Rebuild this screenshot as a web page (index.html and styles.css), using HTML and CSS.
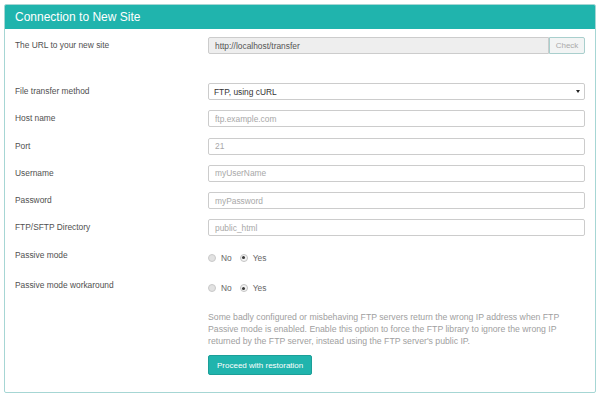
FILE: index.html
```html
<!DOCTYPE html>
<html lang="en">
<head>
    <meta charset="UTF-8">
    <title>Connection to New Site</title>
    <link rel="stylesheet" href="styles.css">
</head>
<body>
    <div class="panel">
        <div class="panel-heading">Connection to New Site</div>
        <form class="panel-body">
            <div class="row row-url">
                <label class="row-label">The URL to your new site</label>
                <div class="input-group">
                    <input class="form-control readonly" type="text" value="http://localhost/transfer" readonly>
                    <button class="btn-check" type="button">Check</button>
                </div>
            </div>

            <div class="row">
                <label class="row-label">File transfer method</label>
                <div class="select-wrap">
                    <select class="form-control">
                        <option>FTP, using cURL</option>
                        <option>SFTP, using cURL</option>
                    </select>
                </div>
            </div>

            <div class="row">
                <label class="row-label">Host name</label>
                <input class="form-control" type="text" placeholder="ftp.example.com">
            </div>

            <div class="row">
                <label class="row-label">Port</label>
                <input class="form-control" type="text" placeholder="21">
            </div>

            <div class="row">
                <label class="row-label">Username</label>
                <input class="form-control" type="text" placeholder="myUserName">
            </div>

            <div class="row">
                <label class="row-label">Password</label>
                <input class="form-control" type="password" placeholder="myPassword">
            </div>

            <div class="row">
                <label class="row-label">FTP/SFTP Directory</label>
                <input class="form-control" type="text" placeholder="public_html">
            </div>

            <div class="row row-radio">
                <label class="row-label">Passive mode</label>
                <div class="radios">
                    <label class="radio"><input type="radio" name="passive"> No</label>
                    <label class="radio"><input type="radio" name="passive" checked> Yes</label>
                </div>
            </div>

            <div class="row row-radio row-last">
                <label class="row-label">Passive mode workaround</label>
                <div>
                    <div class="radios">
                        <label class="radio"><input type="radio" name="workaround"> No</label>
                        <label class="radio"><input type="radio" name="workaround" checked> Yes</label>
                    </div>
                    <p class="help-block">Some badly configured or misbehaving FTP servers return the wrong IP address when FTP Passive mode is enabled. Enable this option to force the FTP library to ignore the wrong IP returned by the FTP server, instead using the FTP server's public IP.</p>
                    <button class="btn-primary" type="button">Proceed with restoration</button>
                </div>
            </div>
        </form>
    </div>
</body>
</html>
```

FILE: styles.css
```css
* {
    box-sizing: border-box;
}

body {
    margin: 4px;
    font-family: 'Liberation Sans', Arial, sans-serif;
    font-size: 8.4px;
    color: #505050;
    background: #fff;
}

.panel {
    border: 1px solid #a6d6d4;
    border-radius: 2px;
    overflow: hidden;
}

.panel-heading {
    background: #20b4ad;
    color: #fff;
    height: 24px;
    line-height: 24px;
    padding: 0 10px;
    font-size: 12px;
}

.panel-body {
    padding: 8px 10px 17px 10px;
    margin: 0;
}

.row {
    display: grid;
    grid-template-columns: 193px 1fr;
    margin-bottom: 10.3px;
}

.row-url {
    margin-bottom: 29px;
}

.row-label {
    line-height: 17px;
}

.form-control {
    display: block;
    width: 100%;
    height: 17px;
    margin: 0;
    padding: 0 6px;
    border: 1px solid #ccc;
    border-radius: 2px;
    background: #fff;
    font-family: inherit;
    font-size: 8.4px;
    color: #444;
    outline: none;
}

.form-control::placeholder {
    color: #a8a8a8;
}

.form-control.readonly {
    flex: 1;
    min-width: 0;
    background: #eee;
    color: #555;
    border-radius: 2px 0 0 2px;
}

.input-group {
    display: flex;
}

.btn-check {
    flex-shrink: 0;
    width: 36px;
    height: 17px;
    margin: 0;
    padding: 0;
    border: 1px solid #a9cfcd;
    border-radius: 0 2px 2px 0;
    background: #f2f4f4;
    color: #aaa;
    font-family: inherit;
    font-size: 8px;
}

.select-wrap {
    position: relative;
}

.select-wrap select {
    appearance: none;
    -webkit-appearance: none;
    color: #333;
    padding-left: 5px;
}

.select-wrap::after {
    content: "";
    position: absolute;
    right: 5px;
    top: 7px;
    border-left: 2px solid transparent;
    border-right: 2px solid transparent;
    border-top: 3px solid #222;
}

/* Radio rows */
.radios {
    display: flex;
    align-items: center;
    gap: 8px;
    height: 20px;
    padding-top: 2px;
}

.radio {
    display: flex;
    align-items: center;
    gap: 5px;
    color: #666;
}

.radio input {
    appearance: none;
    -webkit-appearance: none;
    width: 8px;
    height: 8px;
    margin: 0;
    border: 1px solid #c9c9c9;
    border-radius: 50%;
    background: #e2e2e2;
    position: relative;
}

.radio input:checked {
    background: #f3f3f3;
    border-color: #c4c4c4;
}

.radio input:checked::after {
    content: "";
    position: absolute;
    left: 1.5px;
    top: 1.5px;
    width: 3px;
    height: 3px;
    border-radius: 50%;
    background: #3a3a3a;
}

.row-last {
    margin-bottom: 0;
}

.help-block {
    margin: 14px 0 8px;
    line-height: 12px;
    font-size: 8.7px;
    color: #a0a0a0;
}

.btn-primary {
    height: 20px;
    padding: 0 8px;
    border: 1px solid #1c9f98;
    border-radius: 2px;
    background: #20b4ad;
    color: #fff;
    font-family: inherit;
    font-size: 8px;
}
```
